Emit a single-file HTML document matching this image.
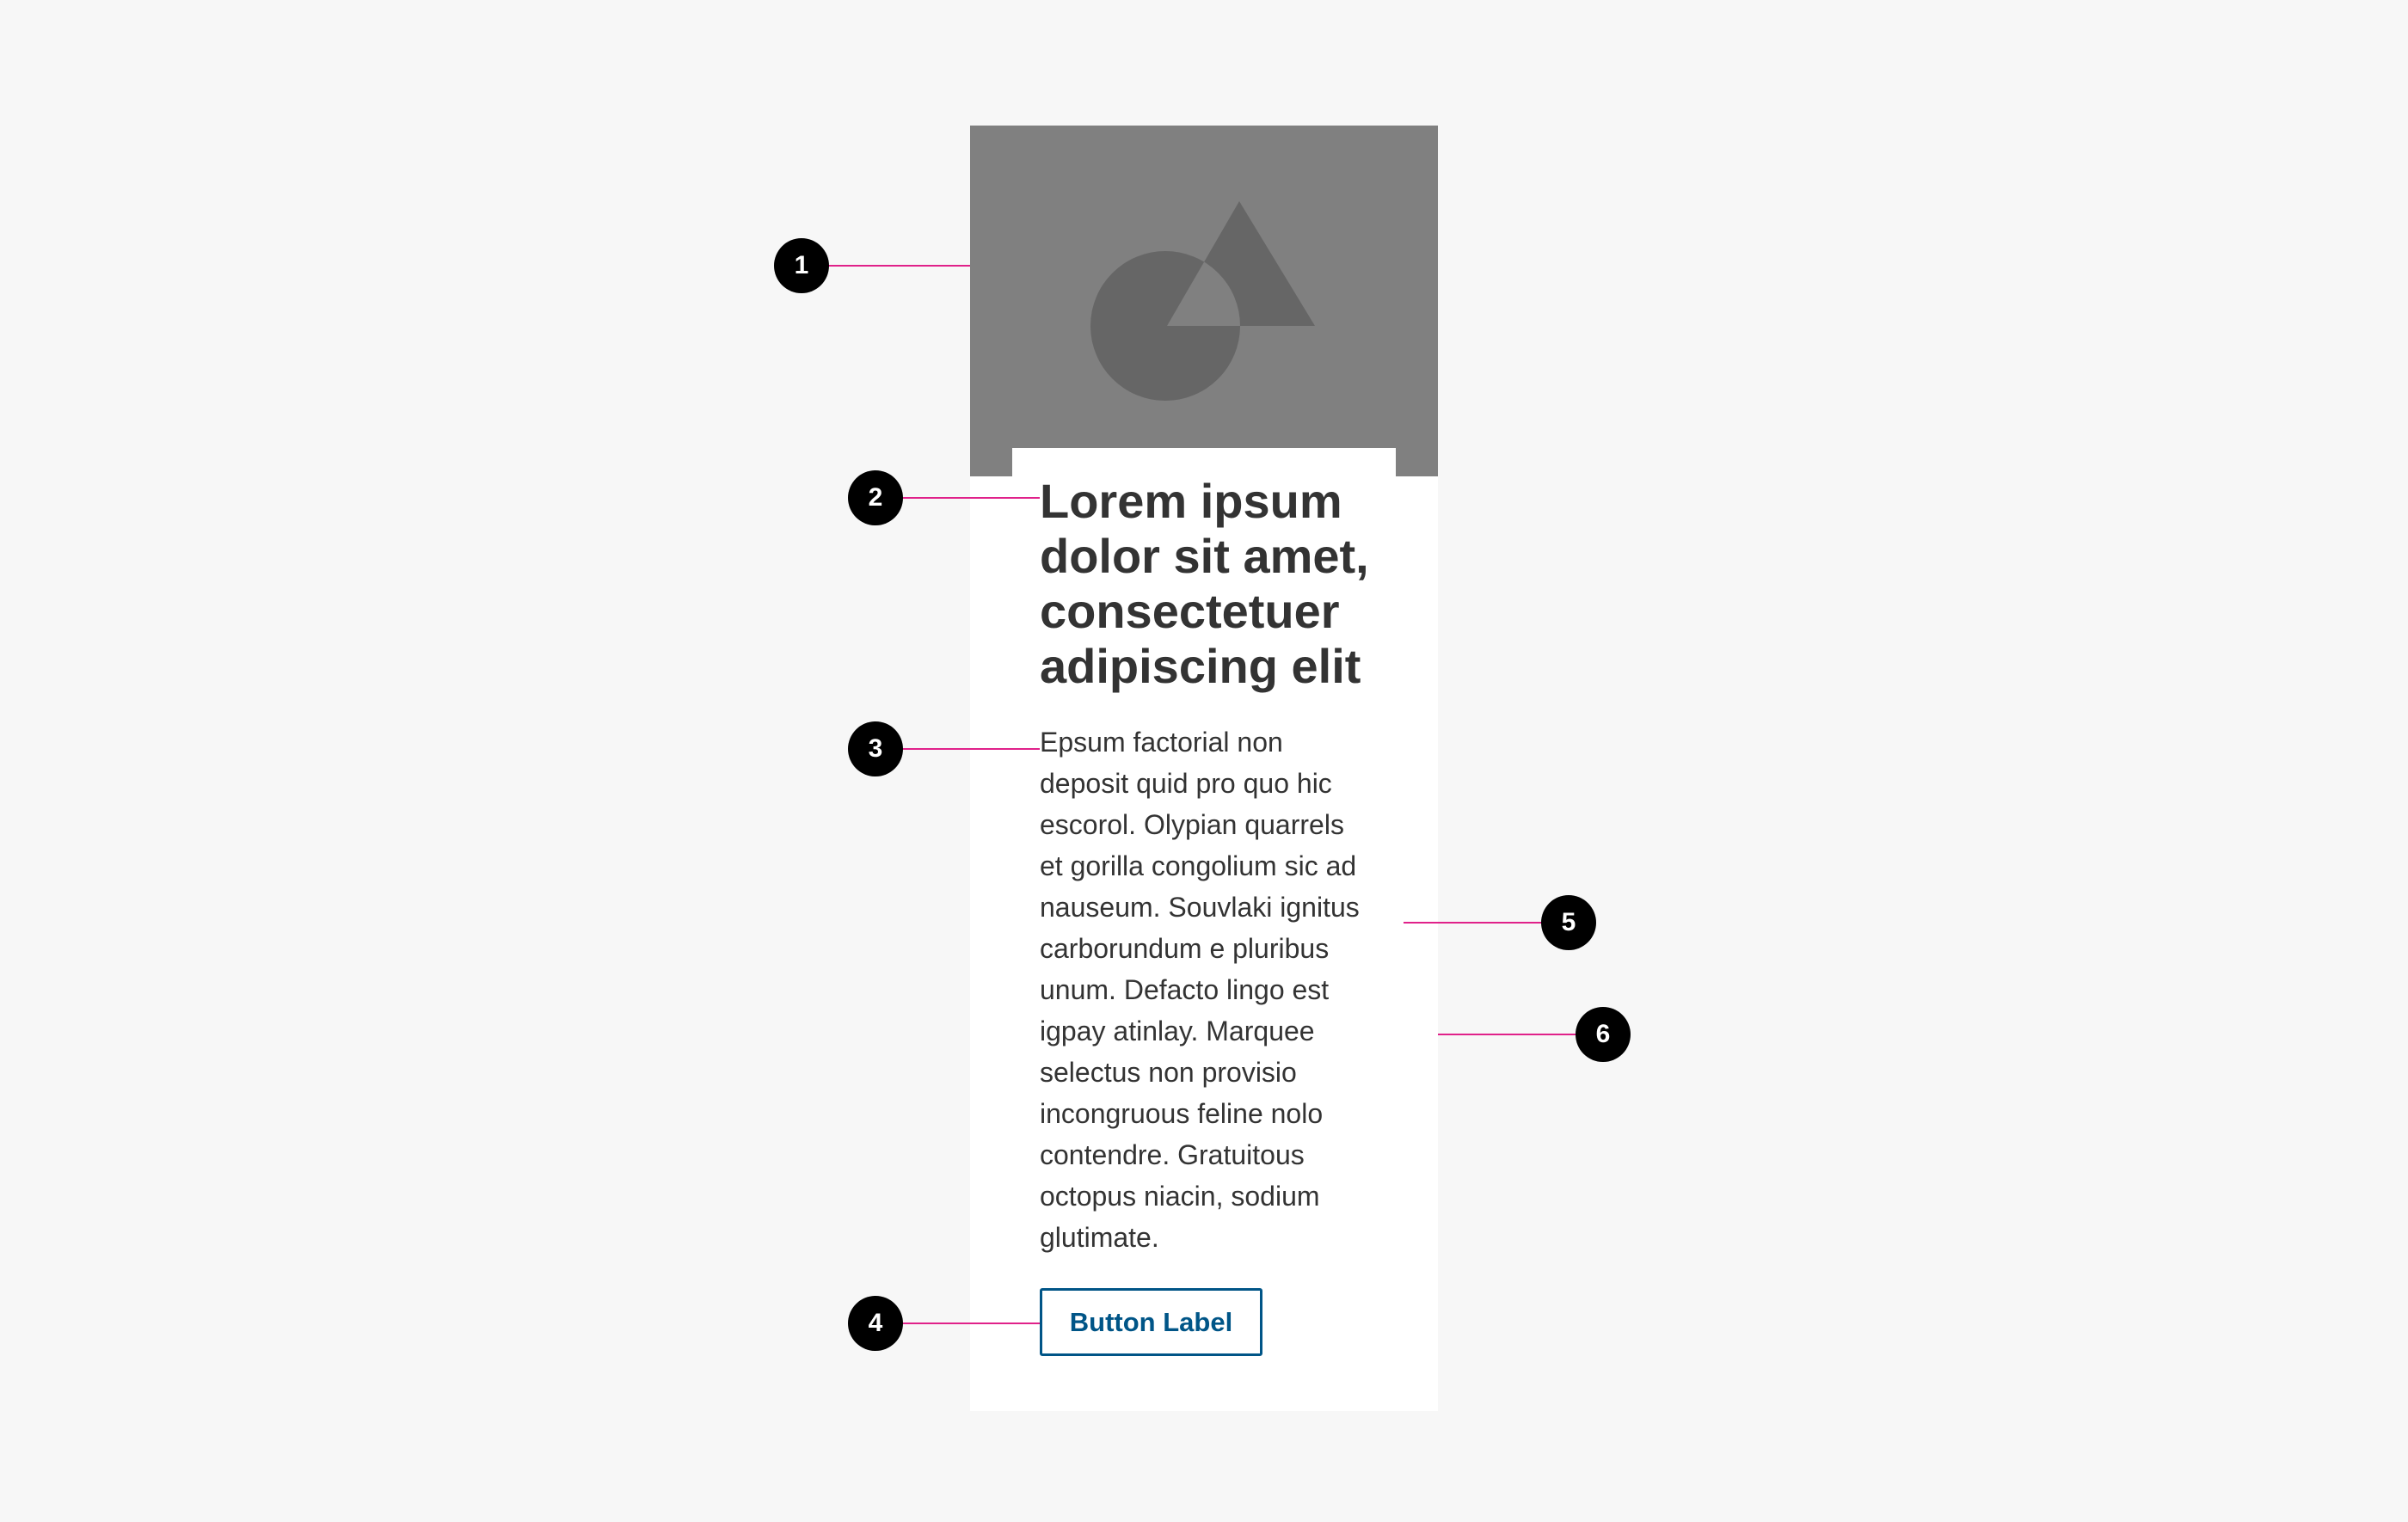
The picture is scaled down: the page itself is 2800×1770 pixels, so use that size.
<!DOCTYPE html>
<html><head><meta charset="utf-8"><style>
html,body{margin:0;padding:0}
body{width:2800px;height:1770px;background:#f7f7f7;position:relative;overflow:hidden;font-family:"Liberation Sans",Arial,sans-serif}
.abs{position:absolute}
.card{left:1128px;top:146px;width:544px;height:1495px;background:#fff}
.img{left:1128px;top:146px;width:544px;height:408px;background:#808080}
.tab{left:1177px;top:521px;width:446px;height:40px;background:#fff}
h1{position:absolute;left:1209px;top:551px;margin:0;font-size:56px;line-height:64px;font-weight:bold;color:#333;white-space:nowrap}
.body{left:1209px;top:839px;font-size:32px;line-height:48px;color:#333;margin:0;white-space:nowrap}
.btn{left:1209px;top:1498px;width:253px;height:73px;border:3px solid #005587;border-radius:3px;color:#005587;font-weight:bold;font-size:31px;line-height:73px;text-align:center}
.dot{width:64px;height:64px;border-radius:50%;background:#000;color:#fff;font-weight:bold;font-size:30px;line-height:64px;text-align:center}
.ln{height:2px;background:#e0218a}
</style></head><body>
<div class="abs card"></div>
<div class="abs img"></div>
<svg class="abs" style="left:1128px;top:146px" width="544" height="408">
<defs><clipPath id="c"><circle cx="227" cy="233" r="87"/></clipPath></defs>
<circle cx="227" cy="233" r="87" fill="#666"/>
<polygon points="313,88 401,233 229,233" fill="#666"/>
<polygon points="313,88 401,233 229,233" fill="#808080" clip-path="url(#c)"/>
</svg>
<div class="abs tab"></div>
<h1>Lorem ipsum<br>dolor sit amet,<br>consectetuer<br>adipiscing elit</h1>
<p class="abs body">Epsum factorial non<br>deposit quid pro quo hic<br>escorol. Olypian quarrels<br>et gorilla congolium sic ad<br>nauseum. Souvlaki ignitus<br>carborundum e pluribus<br>unum. Defacto lingo est<br>igpay atinlay. Marquee<br>selectus non provisio<br>incongruous feline nolo<br>contendre. Gratuitous<br>octopus niacin, sodium<br>glutimate.</p>
<div class="abs btn">Button Label</div>

<div class="abs ln" style="left:960px;top:308px;width:168px"></div>
<div class="abs dot" style="left:900px;top:277px">1</div>
<div class="abs ln" style="left:1040px;top:578px;width:169px"></div>
<div class="abs dot" style="left:986px;top:547px">2</div>
<div class="abs ln" style="left:1040px;top:870px;width:169px"></div>
<div class="abs dot" style="left:986px;top:839px">3</div>
<div class="abs ln" style="left:1040px;top:1538px;width:169px"></div>
<div class="abs dot" style="left:986px;top:1507px">4</div>
<div class="abs ln" style="left:1632px;top:1072px;width:170px"></div>
<div class="abs dot" style="left:1792px;top:1041px">5</div>
<div class="abs ln" style="left:1672px;top:1202px;width:170px"></div>
<div class="abs dot" style="left:1832px;top:1171px">6</div>
</body></html>
